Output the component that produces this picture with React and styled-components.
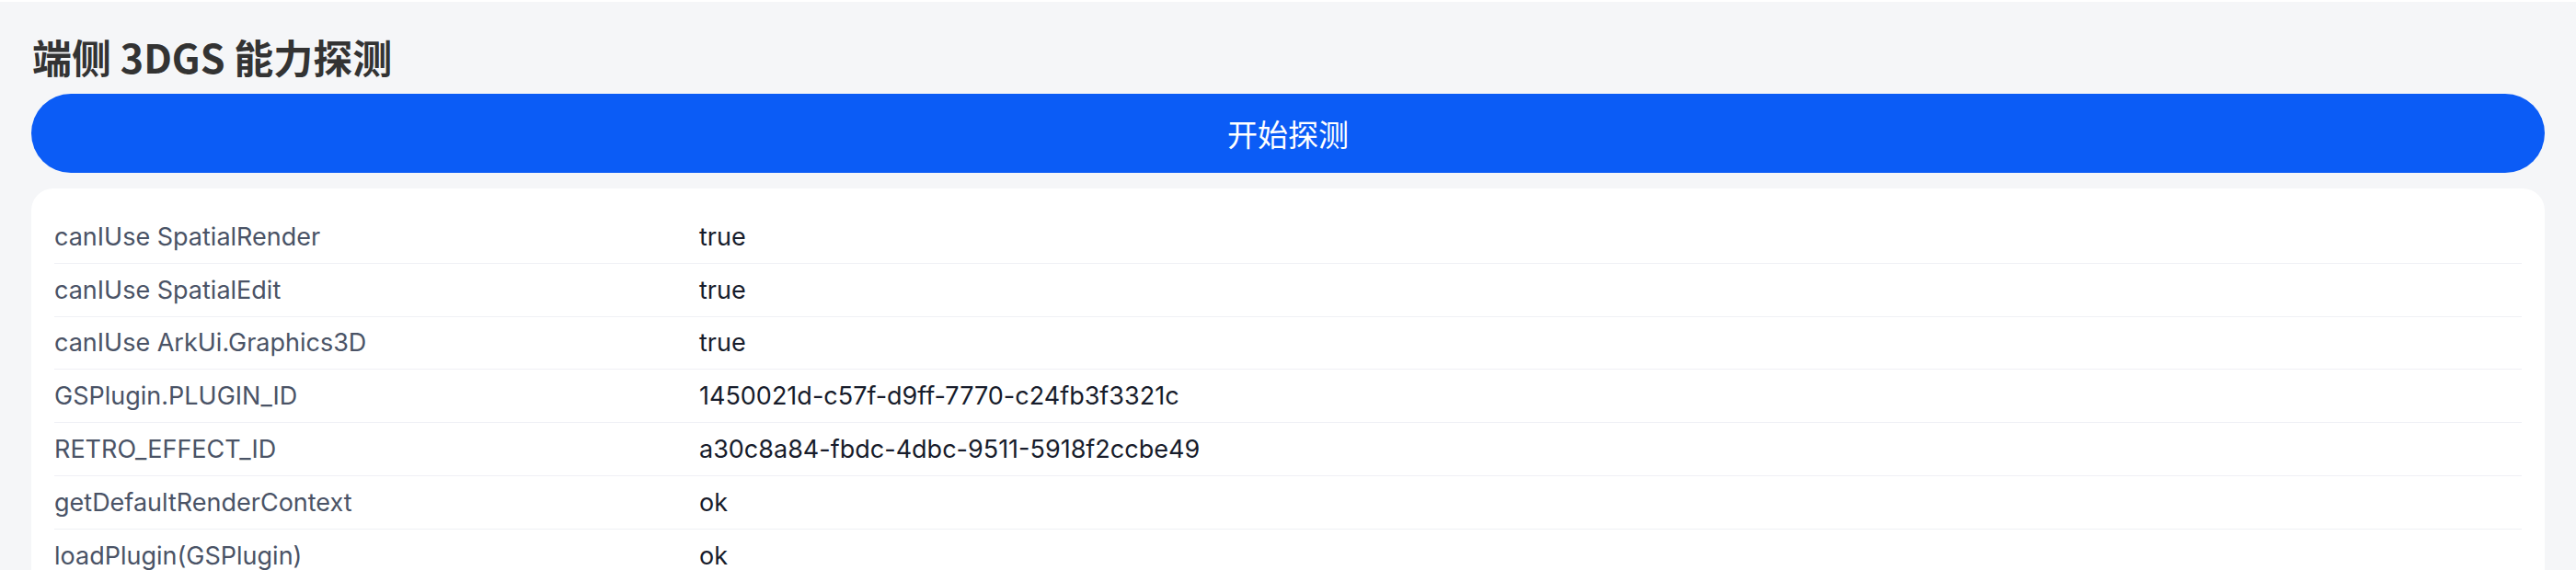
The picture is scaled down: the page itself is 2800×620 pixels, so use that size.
import React from 'react';
import styled, { createGlobalStyle } from 'styled-components';

const rows = [
    { label: 'canIUse SpatialRender', value: 'true' },
    { label: 'canIUse SpatialEdit', value: 'true' },
    { label: 'canIUse ArkUi.Graphics3D', value: 'true' },
    { label: 'GSPlugin.PLUGIN_ID', value: '1450021d-c57f-d9ff-7770-c24fb3f3321c' },
    { label: 'RETRO_EFFECT_ID', value: 'a30c8a84-fbdc-4dbc-9511-5918f2ccbe49' },
    { label: 'getDefaultRenderContext', value: 'ok' },
    { label: 'loadPlugin(GSPlugin)', value: 'ok' },
];

const GlobalStyle = createGlobalStyle`
    html, body {
        margin: 0;
        padding: 0;
        background: #f5f6f8;
    }
    body {
        font-family: Inter, "Noto Sans", "Noto Sans CJK SC", sans-serif;
    }
`;

const App = () => {
    return (
        <>
            <GlobalStyle />
            <Page>
                <Title>端侧 3DGS 能力探测</Title>
                <StartButton type="button">开始探测</StartButton>
                <ResultCard>
                    {rows.map((row) => (
                        <ResultRow key={row.label}>
                            <RowLabel>{row.label}</RowLabel>
                            <RowValue>{row.value}</RowValue>
                        </ResultRow>
                    ))}
                </ResultCard>
            </Page>
        </>
    );
};

export default App;

const Page = styled.div`
    min-height: 620px;
    box-sizing: border-box;
    border-top: 2px solid #ffffff;
    padding: 0 34px;
    background: #f5f6f8;
    display: flex;
    flex-direction: column;
`;

const Title = styled.h1`
    margin: 31px 0 0 1px;
    font-family: "Noto Sans CJK SC", Inter, sans-serif;
    font-size: 43px;
    font-weight: 700;
    line-height: 56px;
    color: #333333;
`;

const StartButton = styled.button`
    margin-top: 13px;
    height: 86px;
    width: 100%;
    border: none;
    border-radius: 43px;
    background: #0b5cf6;
    color: #ffffff;
    font-family: "Noto Sans CJK SC", sans-serif;
    font-size: 33px;
    font-weight: 400;
    cursor: pointer;
`;

const ResultCard = styled.div`
    margin-top: 17px;
    background: #ffffff;
    border-radius: 24px;
    padding: 24px 25px;
`;

const ResultRow = styled.div`
    display: grid;
    grid-template-columns: 701px 1fr;
    align-items: center;
    box-sizing: border-box;
    height: 57.8px;
    border-bottom: 1px solid #eff0f5;
`;

const RowLabel = styled.span`
    font-size: 27px;
    color: #4a5366;
    white-space: nowrap;
`;

const RowValue = styled.span`
    font-size: 27px;
    color: #171c2b;
    white-space: nowrap;
`;
